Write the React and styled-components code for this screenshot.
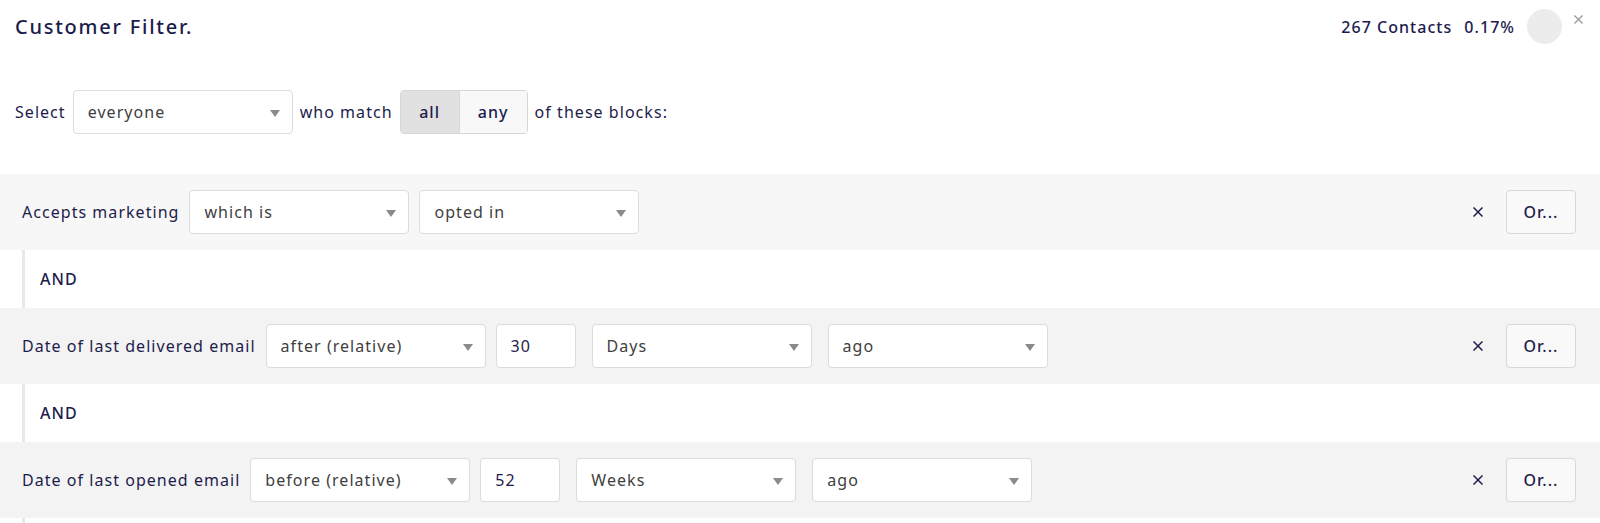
import React from 'react';
import styled, { createGlobalStyle } from 'styled-components';

const GlobalStyle = createGlobalStyle`
  body {
    margin: 0;
    background: #ffffff;
    font-family: "Noto Sans", "Open Sans", sans-serif;
    letter-spacing: 0.065em;
    color: #1d1c4c;
  }
`;

const Page = styled.div`
  width: 1600px;
  height: 523px;
  overflow: hidden;
`;

const Header = styled.div`
  display: flex;
  justify-content: space-between;
  align-items: flex-start;
  padding: 9px 17px 0 15px;
  height: 35px;
`;

const Title = styled.h1`
  margin: 4px 0 0;
  font-size: 20px;
  font-weight: 500;
  letter-spacing: 1.75px;
`;

const Stats = styled.div`
  display: flex;
  align-items: center;
  gap: 12px;
  font-size: 16px;
  font-weight: 500;
`;

const Avatar = styled.div`
  width: 35px;
  height: 35px;
  border-radius: 50%;
  background: #ececec;
`;

const Dismiss = styled.svg`
  align-self: flex-start;
  margin-top: 6px;
  width: 9px;
  height: 9px;
  stroke: #9a9a9a;
  stroke-width: 1.4;
`;

const SelectRow = styled.div`
  display: flex;
  align-items: center;
  gap: 7px;
  margin-top: 46px;
  padding-left: 15px;
  font-size: 16px;
`;

const Dropdown = styled.div`
  position: relative;
  box-sizing: border-box;
  width: ${(p) => p.width || 220}px;
  height: 44px;
  display: flex;
  align-items: center;
  padding: 0 14px;
  background: #fff;
  border: 1px solid #dcdcdc;
  border-radius: 4px;
  color: #404040;
  font-size: 16px;
  margin-right: ${(p) => (p.spaced ? 6 : 0)}px;
  &::after {
    content: '';
    position: absolute;
    right: 12px;
    top: 19px;
    border-left: 5px solid transparent;
    border-right: 5px solid transparent;
    border-top: 7px solid #8a8a8a;
  }
`;

const NumberBox = styled.div`
  box-sizing: border-box;
  width: 80px;
  height: 44px;
  display: flex;
  align-items: center;
  padding: 0 14px;
  background: #fff;
  border: 1px solid #dcdcdc;
  border-radius: 4px;
  margin-right: 6px;
  font-size: 16px;
`;

const Toggle = styled.div`
  display: flex;
  height: 44px;
  box-sizing: border-box;
  border: 1px solid #d6d6d6;
  border-radius: 4px;
  overflow: hidden;
`;

const ToggleOption = styled.div`
  width: ${(p) => p.width}px;
  display: flex;
  align-items: center;
  justify-content: center;
  font-weight: 500;
  background: ${(p) => (p.active ? '#e1e1e1' : '#f8f8f8')};
  border-right: ${(p) => (p.active ? '1px solid #d6d6d6' : 'none')};
`;

const Blocks = styled.div`
  margin-top: 40px;
`;

const Block = styled.div`
  display: flex;
  align-items: center;
  gap: 10px;
  height: 76px;
  box-sizing: border-box;
  padding: 0 24px 0 22px;
  background: ${(p) => (p.light ? '#f7f7f7' : '#f3f3f3')};
`;

const Label = styled.span`
  font-size: 16px;
  white-space: nowrap;
`;

const Spacer = styled.div`
  flex: 1;
`;

const Remove = styled.svg`
  width: 10px;
  height: 10px;
  stroke: #1d1c4c;
  stroke-width: 1.5;
  margin-right: 13px;
`;

const OrButton = styled.button`
  width: 70px;
  height: 44px;
  border: 1px solid #d8d8d8;
  border-radius: 4px;
  background: #f9f9f9;
  color: #1d1c4c;
  font-family: inherit;
  letter-spacing: inherit;
  font-size: 16px;
  font-weight: 500;
`;

const Joiner = styled.div`
  margin-left: 22px;
  height: ${(p) => p.height || 58}px;
  border-left: 3px solid #e8e8e8;
  display: flex;
  align-items: center;
  padding-left: 15px;
  font-size: 16px;
  font-weight: 500;
`;

const blocks = [
  {
    label: 'Accepts marketing',
    light: true,
    controls: [
      { type: 'select', value: 'which is' },
      { type: 'select', value: 'opted in' },
    ],
  },
  {
    label: 'Date of last delivered email',
    controls: [
      { type: 'select', value: 'after (relative)' },
      { type: 'number', value: '30' },
      { type: 'select', value: 'Days', spaced: true },
      { type: 'select', value: 'ago' },
    ],
  },
  {
    label: 'Date of last opened email',
    controls: [
      { type: 'select', value: 'before (relative)' },
      { type: 'number', value: '52' },
      { type: 'select', value: 'Weeks', spaced: true },
      { type: 'select', value: 'ago' },
    ],
  },
];

const Cross = () => (
  <>
    <line x1="0.5" y1="0.5" x2="9.5" y2="9.5" />
    <line x1="9.5" y1="0.5" x2="0.5" y2="9.5" />
  </>
);

function FilterBlock({ block }) {
  return (
    <Block light={block.light}>
      <Label>{block.label}</Label>
      {block.controls.map((c, i) =>
        c.type === 'number' ? (
          <NumberBox key={i}>{c.value}</NumberBox>
        ) : (
          <Dropdown key={i} spaced={c.spaced}>
            {c.value}
          </Dropdown>
        )
      )}
      <Spacer />
      <Remove viewBox="0 0 10 10">
        <Cross />
      </Remove>
      <OrButton>Or...</OrButton>
    </Block>
  );
}

export default function App() {
  return (
    <Page>
      <GlobalStyle />
      <Header>
        <Title>Customer Filter.</Title>
        <Stats>
          <span>267 Contacts</span>
          <span>0.17%</span>
          <Avatar />
          <Dismiss viewBox="0 0 10 10">
            <Cross />
          </Dismiss>
        </Stats>
      </Header>

      <SelectRow>
        <span>Select</span>
        <Dropdown>everyone</Dropdown>
        <span>who match</span>
        <Toggle>
          <ToggleOption width={58} active>all</ToggleOption>
          <ToggleOption width={67}>any</ToggleOption>
        </Toggle>
        <span>of these blocks:</span>
      </SelectRow>

      <Blocks>
        {blocks.map((b, i) => (
          <React.Fragment key={b.label}>
            {i > 0 && <Joiner>AND</Joiner>}
            <FilterBlock block={b} />
          </React.Fragment>
        ))}
        <Joiner height={20} />
      </Blocks>
    </Page>
  );
}
